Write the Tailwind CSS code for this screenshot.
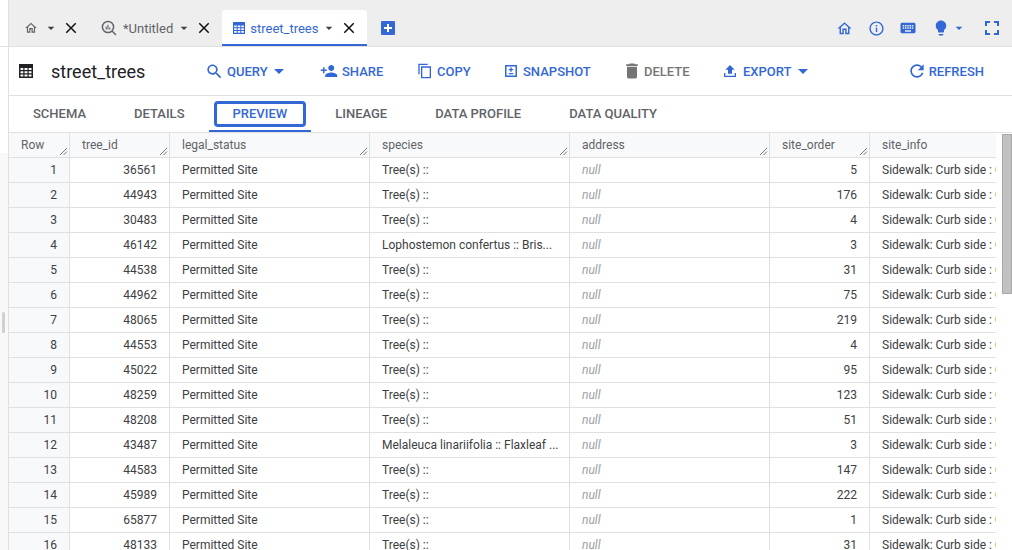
<!doctype html>
<html lang="en">
<head>
<meta charset="utf-8">
<title>street_trees</title>
<script src="https://cdn.jsdelivr.net/npm/@tailwindcss/browser@4"></script>
</head>
<body class="m-0 overflow-hidden bg-white">
<div class="relative flex h-[550px] w-[1012px] overflow-hidden bg-white font-['Roboto',sans-serif]">
  <!-- left rail -->
  <div class="flex w-[9px] shrink-0 flex-col border-r border-[#e0e0e0]">
    <div class="h-[47px] border-b border-[#e0e0e0] bg-white"></div>
    <div class="h-[106px] bg-white"></div>
    <div class="flex-1 bg-[#f8f8f8]"></div>
  </div>
  <div class="absolute left-[2px] top-[312px] h-[21px] w-[3px] rounded-sm bg-[#d0d0d0]"></div>

  <div class="flex min-w-0 flex-1 flex-col">
    <!-- tab bar -->
    <div class="flex h-[47px] shrink-0 items-end border-b border-[#e0e0e0] bg-[#eeeeee] pt-[10px] text-[13px]">
      <div class="flex h-[36px] items-center pl-[15px]">
        <svg class="h-[14px] w-[14px] fill-[#5f6368]" viewBox="0 0 24 24"><path d="M12 5.69l5 4.5V18h-2v-6H9v6H7v-7.81l5-4.5M12 3L2 12h3v8h6v-6h2v6h6v-8h3L12 3z"/></svg>
        <svg class="ml-[5px] h-[16px] w-[16px] fill-[#3c4043]" viewBox="0 0 24 24"><path d="M7 10l5 5 5-5z"/></svg>
        <svg class="ml-[3px] h-[18px] w-[18px] fill-[#111]" viewBox="0 0 24 24"><path d="M19 6.41L17.59 5 12 10.59 6.41 5 5 6.41 10.59 12 5 17.59 6.41 19 12 13.41 17.59 19 19 17.59 13.41 12z"/></svg>
      </div>
      <div class="ml-[21px] flex h-[36px] items-center">
        <svg class="h-[16px] w-[16px] fill-none stroke-[#5f6368]" viewBox="0 0 16 16"><circle cx="7" cy="7" r="5.6" stroke-width="1.5"/><path d="M11 11l4 4" stroke-width="1.5"/><path d="M5.2 6.5v3M7 4.8v4.700M8.800 7.500v2" stroke-width="1.100"/></svg>
        <span class="ml-[6px] pt-[1px] text-[#5f6368]">*Untitled</span>
        <svg class="ml-[3px] h-[16px] w-[16px] fill-[#3c4043]" viewBox="0 0 24 24"><path d="M7 10l5 5 5-5z"/></svg>
        <svg class="ml-[3px] h-[18px] w-[18px] fill-[#111]" viewBox="0 0 24 24"><path d="M19 6.41L17.59 5 12 10.59 6.41 5 5 6.41 10.59 12 5 17.59 6.41 19 12 13.41 17.59 19 19 17.59 13.41 12z"/></svg>
      </div>
      <div class="ml-[9px] flex h-[36px] w-[145px] items-center rounded-t-[3px] border-b-2 border-[#3367d6] bg-white pt-[2px] pl-[11px]">
        <svg class="h-[12px] w-[12px] fill-[#3367d6]" viewBox="0 0 12 12"><path fill-rule="evenodd" d="M0 0h12v12H0zM1.200 3.500v1.800h2.500V3.500zm3.500 0v1.800h2.600V3.500zm3.600 0v1.800h2.500V3.500zM1.200 6.300v1.800h2.500V6.300zm3.500 0v1.800h2.600V6.300zm3.600 0v1.800h2.500V6.300zM1.200 9.100v1.700h2.500V9.100zm3.500 0v1.700h2.600V9.100zm3.600 0v1.700h2.500V9.100z"/></svg>
        <span class="ml-[5px] pt-[1px] text-[#3367d6]">street_trees</span>
        <svg class="ml-[3px] h-[16px] w-[16px] fill-[#3c4043]" viewBox="0 0 24 24"><path d="M7 10l5 5 5-5z"/></svg>
        <svg class="ml-[3px] h-[18px] w-[18px] fill-[#111]" viewBox="0 0 24 24"><path d="M19 6.41L17.59 5 12 10.59 6.41 5 5 6.41 10.59 12 5 17.59 6.41 19 12 13.41 17.59 19 19 17.59 13.41 12z"/></svg>
      </div>
      <div class="ml-[14px] flex h-[36px] items-center">
        <svg class="h-[14px] w-[14px]" viewBox="0 0 14 14"><rect width="14" height="14" rx="1" fill="#3367d6"/><path d="M6 3h2v3h3v2H8v3H6V8H3V6h3z" fill="#fff"/></svg>
      </div>
      <div class="ml-auto flex h-[36px] items-center pr-[8px]">
        <svg class="h-[17px] w-[17px] fill-[#3367d6]" viewBox="0 0 24 24"><path d="M12 5.69l5 4.5V18h-2v-6H9v6H7v-7.81l5-4.5M12 3L2 12h3v8h6v-6h2v6h6v-8h3L12 3z"/></svg>
        <svg class="ml-[15px] h-[17px] w-[17px] fill-[#3367d6]" viewBox="0 0 24 24"><path d="M11 7h2v2h-2zm0 4h2v6h-2zm1-9C6.480 2 2 6.480 2 12s4.480 10 10 10 10-4.480 10-10S17.520 2 12 2zm0 18c-4.410 0-8-3.590-8-8s3.590-8 8-8 8 3.590 8 8-3.590 8-8 8z"/></svg>
        <svg class="ml-[14px] h-[18px] w-[18px] fill-[#3367d6]" viewBox="0 0 24 24"><path d="M20 5H4c-1.100 0-1.990.9-1.990 2L2 17c0 1.100.9 2 2 2h16c1.100 0 2-.9 2-2V7c0-1.100-.9-2-2-2zm-9 3h2v2h-2V8zm0 3h2v2h-2v-2zM8 8h2v2H8V8zm0 3h2v2H8v-2zm-1 2H5v-2h2v2zm0-3H5V8h2v2zm9 7H8v-2h8v2zm0-4h-2v-2h2v2zm0-3h-2V8h2v2zm3 3h-2v-2h2v2zm0-3h-2V8h2v2z"/></svg>
        <svg class="ml-[15px] h-[18px] w-[18px] fill-[#3367d6]" viewBox="0 0 24 24"><path d="M9 21c0 .5.4 1 1 1h4c.6 0 1-.5 1-1v-1H9v1zm3-19C8.100 2 5 5.100 5 9c0 2.400 1.200 4.500 3 5.700V17c0 .5.4 1 1 1h6c.6 0 1-.5 1-1v-2.300c1.800-1.300 3-3.400 3-5.700 0-3.900-3.100-7-7-7z"/></svg>
        <svg class="ml-[1px] h-[16px] w-[16px] fill-[#3367d6]" viewBox="0 0 24 24"><path d="M7 10l5 5 5-5z"/></svg>
        <svg class="ml-[13px] h-[24px] w-[24px] fill-[#3367d6]" viewBox="0 0 24 24"><path d="M7 14H5v5h5v-2H7v-3zm-2-4h2V7h3V5H5v5zm12 7h-3v2h5v-5h-2v3zM14 5v2h3v3h2V5h-5z"/></svg>
      </div>
    </div>

    <!-- toolbar -->
    <div class="flex h-[49px] shrink-0 items-center border-b border-[#e0e0e0] text-[13px] font-medium text-[#3367d6]">
      <svg class="ml-[10px] h-[14px] w-[14px] fill-[#202124]" viewBox="0 0 14 14"><path fill-rule="evenodd" d="M0 0h14v14H0zM1.500 4v2h2.800V4zm4 0v2h3V4zm4.200 0v2h2.800V4zM1.500 7.200v2h2.800v-2zm4 0v2h3v-2zm4.200 0v2h2.800v-2zM1.500 10.400v2.100h2.800v-2.100zm4 0v2.100h3v-2.100zm4.200 0v2.100h2.800v-2.100z"/></svg>
      <span class="ml-[18px] w-[94px] text-[18px] font-normal whitespace-nowrap text-[#202124]">street_trees</span>

      <svg class="ml-[60px] h-[19px] w-[19px] fill-[#3367d6]" viewBox="0 0 24 24"><path d="M15.500 14h-.79l-.28-.27C15.410 12.590 16 11.110 16 9.500 16 5.910 13.090 3 9.500 3S3 5.910 3 9.500 5.910 16 9.500 16c1.610 0 3.090-.59 4.230-1.570l.27.28v.79l5 4.990L20.490 19l-4.990-5zm-6 0C7.010 14 5 11.990 5 9.500S7.010 5 9.500 5 14 7.010 14 9.500 11.990 14 9.500 14z"/></svg>
      <span class="ml-[3px] w-[40px] pt-[1px]">QUERY</span>
      <svg class="h-[24px] w-[24px] fill-[#3367d6]" viewBox="0 0 24 24"><path d="M7 10l5 5 5-5z"/></svg>

      <svg class="ml-[29px] h-[18px] w-[18px] fill-[#3367d6]" viewBox="0 0 24 24"><path d="M15 12c2.210 0 4-1.790 4-4s-1.790-4-4-4-4 1.790-4 4 1.790 4 4 4zm-9-2V7H4v3H1v2h3v3h2v-3h3v-2H6zm9 4c-2.670 0-8 1.340-8 4v2h16v-2c0-2.660-5.330-4-8-4z"/></svg>
      <span class="ml-[4px] w-[41px] pt-[1px]">SHARE</span>

      <svg class="ml-[34px] h-[16px] w-[16px] fill-[#3367d6]" viewBox="0 0 24 24"><path d="M16 1H2v16h2V3h12V1zm5 4H6v18h15V5zm-2 16H8V7h11v14z"/></svg>
      <span class="ml-[4px] w-[33px] pt-[1px]">COPY</span>

      <svg class="ml-[34px] h-[14px] w-[14px]" viewBox="0 0 14 14"><path fill="#3367d6" fill-rule="evenodd" d="M1 1h12v12H1zM2.500 2.500v9h9v-9z"/><path fill="#3367d6" d="M6.300 3.500h1.400v1.500h1.500v1.300H7.700v1.500H6.300V6.300H4.800V5h1.500zM4.800 9h4.400v1.300H4.800z"/></svg>
      <span class="ml-[5px] w-[68px] pt-[1px]">SNAPSHOT</span>

      <svg class="ml-[31px] h-[20px] w-[20px] fill-[#757575]" viewBox="0 0 24 24"><path d="M6 19c0 1.100.9 2 2 2h8c1.100 0 2-.9 2-2V7H6v12zM19 4h-3.500l-1-1h-5l-1 1H5v2h14V4z"/></svg>
      <span class="ml-[2px] w-[46px] pt-[1px] text-[#757575]">DELETE</span>

      <svg class="ml-[32px] h-[16px] w-[16px] fill-[#3367d6]" viewBox="0 0 24 24"><path d="M9 16h6v-6h4l-7-7-7 7h4z"/><path d="M3 15h2v4h14v-4h2v6H3z"/></svg>
      <span class="ml-[5px] w-[48px] pt-[1px]">EXPORT</span>
      <svg class="h-[24px] w-[24px] fill-[#3367d6]" viewBox="0 0 24 24"><path d="M7 10l5 5 5-5z"/></svg>

      <div class="ml-auto flex items-center pr-[28px]">
        <svg class="h-[20px] w-[20px] fill-[#3367d6]" viewBox="0 0 24 24"><path d="M17.650 6.350C16.200 4.900 14.210 4 12 4c-4.420 0-7.990 3.580-7.990 8s3.570 8 7.990 8c3.730 0 6.840-2.550 7.730-6h-2.080c-.82 2.330-3.040 4-5.650 4-3.310 0-6-2.690-6-6s2.690-6 6-6c1.660 0 3.140.69 4.220 1.780L13 11h7V4l-2.350 2.350z"/></svg>
        <span class="ml-[2px] pt-[1px]">REFRESH</span>
      </div>
    </div>

    <!-- sub tabs -->
    <div class="flex h-[37px] shrink-0 items-stretch border-b border-[#e0e0e0] text-[13px] font-medium text-[#5f6368]">
      <div class="flex items-center px-6">SCHEMA</div>
      <div class="flex items-center px-6">DETAILS</div>
      <div class="relative flex items-center border-b-2 border-[#3367d6] px-6 pt-[2px] text-[#3367d6]">PREVIEW
        <span class="absolute left-[5px] right-[5px] top-[5px] h-[26px] rounded-[4px] border-[3px] border-[#3367d6]"></span>
      </div>
      <div class="flex items-center px-6">LINEAGE</div>
      <div class="flex items-center px-6">DATA PROFILE</div>
      <div class="flex items-center px-6">DATA QUALITY</div>
    </div>

    <!-- table -->
    <div class="relative min-h-0 flex-1 overflow-hidden">
      <div class="w-[987px] overflow-hidden">
        <table class="w-[1100px] table-fixed border-separate border-spacing-0 text-[12px] text-[#3c4043] [&_td]:h-[25px] [&_td]:overflow-hidden [&_td]:whitespace-nowrap [&_td]:border-r [&_td]:border-b [&_td]:border-[#e0e0e0] [&_td]:px-3 [&_td]:py-0 [&_th]:relative [&_th]:h-[25px] [&_th]:border-r [&_th]:border-b [&_th]:border-[#e0e0e0] [&_th]:bg-[#f8f9fa] [&_th]:px-3 [&_th]:text-left [&_th]:font-normal [&_th]:text-[#5f6368]">
          <colgroup><col class="w-[61px]"><col class="w-[100px]"><col class="w-[200px]"><col class="w-[200px]"><col class="w-[200px]"><col class="w-[100px]"><col class="w-[239px]"></colgroup>
          <thead>
            <tr>
              <th>Row<svg class="absolute right-[1px] bottom-[1px] h-[9px] w-[9px] stroke-[#777]" viewBox="0 0 9 9"><path d="M1 8l7-7M4.500 8L8 4.500"/></svg></th>
              <th>tree_id<svg class="absolute right-[1px] bottom-[1px] h-[9px] w-[9px] stroke-[#777]" viewBox="0 0 9 9"><path d="M1 8l7-7M4.500 8L8 4.500"/></svg></th>
              <th>legal_status<svg class="absolute right-[1px] bottom-[1px] h-[9px] w-[9px] stroke-[#777]" viewBox="0 0 9 9"><path d="M1 8l7-7M4.500 8L8 4.500"/></svg></th>
              <th>species<svg class="absolute right-[1px] bottom-[1px] h-[9px] w-[9px] stroke-[#777]" viewBox="0 0 9 9"><path d="M1 8l7-7M4.500 8L8 4.500"/></svg></th>
              <th>address<svg class="absolute right-[1px] bottom-[1px] h-[9px] w-[9px] stroke-[#777]" viewBox="0 0 9 9"><path d="M1 8l7-7M4.500 8L8 4.500"/></svg></th>
              <th>site_order<svg class="absolute right-[1px] bottom-[1px] h-[9px] w-[9px] stroke-[#777]" viewBox="0 0 9 9"><path d="M1 8l7-7M4.500 8L8 4.500"/></svg></th>
              <th>site_info</th>
            </tr>
          </thead>
          <tbody>
            <tr><td class="bg-[#f8f9fa] text-right">1</td><td class="text-right">36561</td><td>Permitted Site</td><td>Tree(s) ::</td><td class="text-[#9aa0a6] italic">null</td><td class="text-right">5</td><td>Sidewalk: Curb side : Cutout</td></tr>
            <tr><td class="bg-[#f8f9fa] text-right">2</td><td class="text-right">44943</td><td>Permitted Site</td><td>Tree(s) ::</td><td class="text-[#9aa0a6] italic">null</td><td class="text-right">176</td><td>Sidewalk: Curb side : Cutout</td></tr>
            <tr><td class="bg-[#f8f9fa] text-right">3</td><td class="text-right">30483</td><td>Permitted Site</td><td>Tree(s) ::</td><td class="text-[#9aa0a6] italic">null</td><td class="text-right">4</td><td>Sidewalk: Curb side : Cutout</td></tr>
            <tr><td class="bg-[#f8f9fa] text-right">4</td><td class="text-right">46142</td><td>Permitted Site</td><td>Lophostemon confertus :: Bris...</td><td class="text-[#9aa0a6] italic">null</td><td class="text-right">3</td><td>Sidewalk: Curb side : Cutout</td></tr>
            <tr><td class="bg-[#f8f9fa] text-right">5</td><td class="text-right">44538</td><td>Permitted Site</td><td>Tree(s) ::</td><td class="text-[#9aa0a6] italic">null</td><td class="text-right">31</td><td>Sidewalk: Curb side : Cutout</td></tr>
            <tr><td class="bg-[#f8f9fa] text-right">6</td><td class="text-right">44962</td><td>Permitted Site</td><td>Tree(s) ::</td><td class="text-[#9aa0a6] italic">null</td><td class="text-right">75</td><td>Sidewalk: Curb side : Cutout</td></tr>
            <tr><td class="bg-[#f8f9fa] text-right">7</td><td class="text-right">48065</td><td>Permitted Site</td><td>Tree(s) ::</td><td class="text-[#9aa0a6] italic">null</td><td class="text-right">219</td><td>Sidewalk: Curb side : Cutout</td></tr>
            <tr><td class="bg-[#f8f9fa] text-right">8</td><td class="text-right">44553</td><td>Permitted Site</td><td>Tree(s) ::</td><td class="text-[#9aa0a6] italic">null</td><td class="text-right">4</td><td>Sidewalk: Curb side : Cutout</td></tr>
            <tr><td class="bg-[#f8f9fa] text-right">9</td><td class="text-right">45022</td><td>Permitted Site</td><td>Tree(s) ::</td><td class="text-[#9aa0a6] italic">null</td><td class="text-right">95</td><td>Sidewalk: Curb side : Cutout</td></tr>
            <tr><td class="bg-[#f8f9fa] text-right">10</td><td class="text-right">48259</td><td>Permitted Site</td><td>Tree(s) ::</td><td class="text-[#9aa0a6] italic">null</td><td class="text-right">123</td><td>Sidewalk: Curb side : Cutout</td></tr>
            <tr><td class="bg-[#f8f9fa] text-right">11</td><td class="text-right">48208</td><td>Permitted Site</td><td>Tree(s) ::</td><td class="text-[#9aa0a6] italic">null</td><td class="text-right">51</td><td>Sidewalk: Curb side : Cutout</td></tr>
            <tr><td class="bg-[#f8f9fa] text-right">12</td><td class="text-right">43487</td><td>Permitted Site</td><td>Melaleuca linariifolia :: Flaxleaf ...</td><td class="text-[#9aa0a6] italic">null</td><td class="text-right">3</td><td>Sidewalk: Curb side : Cutout</td></tr>
            <tr><td class="bg-[#f8f9fa] text-right">13</td><td class="text-right">44583</td><td>Permitted Site</td><td>Tree(s) ::</td><td class="text-[#9aa0a6] italic">null</td><td class="text-right">147</td><td>Sidewalk: Curb side : Cutout</td></tr>
            <tr><td class="bg-[#f8f9fa] text-right">14</td><td class="text-right">45989</td><td>Permitted Site</td><td>Tree(s) ::</td><td class="text-[#9aa0a6] italic">null</td><td class="text-right">222</td><td>Sidewalk: Curb side : Cutout</td></tr>
            <tr><td class="bg-[#f8f9fa] text-right">15</td><td class="text-right">65877</td><td>Permitted Site</td><td>Tree(s) ::</td><td class="text-[#9aa0a6] italic">null</td><td class="text-right">1</td><td>Sidewalk: Curb side : Cutout</td></tr>
            <tr><td class="bg-[#f8f9fa] text-right">16</td><td class="text-right">48133</td><td>Permitted Site</td><td>Tree(s) ::</td><td class="text-[#9aa0a6] italic">null</td><td class="text-right">31</td><td>Sidewalk: Curb side : Cutout</td></tr>
          </tbody>
        </table>
      </div>
      <!-- scrollbar thumb -->
      <div class="absolute top-[1px] left-[993px] h-[160px] w-[10px] border border-[#a8a8a8] bg-[#c1c1c1]"></div>
    </div>
  </div>
</div>
</body>
</html>
